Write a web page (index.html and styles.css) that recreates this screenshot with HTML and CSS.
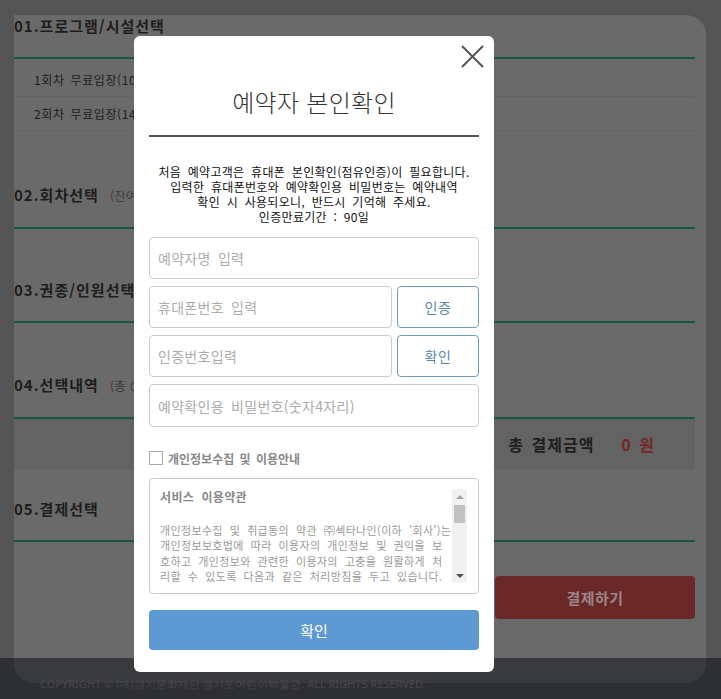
FILE: index.html
```html
<!DOCTYPE html>
<html lang="ko">
<head>
<meta charset="utf-8">
<title>예약자 본인확인</title>
<link rel="stylesheet" href="styles.css">
</head>
<body>
<div class="page">
  <main class="card">
    <section class="sec sec-1">
      <h2 class="sec-title">01.프로그램/시설선택</h2>
      <ul class="rows">
        <li>1회차 무료입장(10:00~11:30)</li>
        <li>2회차 무료입장(14:00~15:30)</li>
      </ul>
    </section>
    <section class="sec sec-2">
      <h2 class="sec-title">02.회차선택 <span class="sub">(잔여인원 : 0명)</span></h2>
    </section>
    <section class="sec sec-3">
      <h2 class="sec-title">03.권종/인원선택</h2>
    </section>
    <section class="sec sec-4">
      <h2 class="sec-title">04.선택내역 <span class="sub">(총 0건)</span></h2>
      <div class="total">
        <span class="total-label">총 결제금액</span>
        <span class="total-value">0 원</span>
      </div>
    </section>
    <section class="sec sec-5">
      <h2 class="sec-title">05.결제선택</h2>
      <div class="pay-row">
        <button class="pay-btn" type="button">결제하기</button>
      </div>
    </section>
  </main>
  <footer class="footer">COPYRIGHT © (재)경기문화재단 경기도어린이박물관. ALL RIGHTS RESERVED.</footer>
</div>

<div class="modal" role="dialog" aria-labelledby="modal-title">
  <button class="close" type="button" aria-label="닫기">
    <svg width="23" height="23" viewBox="0 0 23 23"><path d="M1 1 L22 22 M22 1 L1 22" stroke="#555" stroke-width="2" fill="none"/></svg>
  </button>
  <h1 class="modal-title" id="modal-title">예약자 본인확인</h1>
  <p class="notice">처음 예약고객은 휴대폰 본인확인(점유인증)이 필요합니다.<br>입력한 휴대폰번호와 예약확인용 비밀번호는 예약내역<br>확인 시 사용되오니, 반드시 기억해 주세요.<br>인증만료기간 : 90일</p>
  <div class="fields">
    <input class="input" type="text" placeholder="예약자명 입력">
    <div class="field-row">
      <input class="input" type="text" placeholder="휴대폰번호 입력">
      <button class="btn-line" type="button">인증</button>
    </div>
    <div class="field-row">
      <input class="input" type="text" placeholder="인증번호입력">
      <button class="btn-line" type="button">확인</button>
    </div>
    <input class="input input-last" type="password" placeholder="예약확인용 비밀번호(숫자4자리)">
  </div>
  <label class="agree"><input class="check" type="checkbox"><span>개인정보수집 및 이용안내</span></label>
  <div class="terms">
    <div class="terms-body">
      <div class="terms-scroll">
        <p class="terms-title">서비스 이용약관</p>
        <p class="terms-text">개인정보수집 및 취급동의 약관 ㈜섹타나인(이하 '회사')는 개인정보보호법에 따라 이용자의 개인정보 및 권익을 보호하고 개인정보와 관련한 이용자의 고충을 원활하게 처리할 수 있도록 다음과 같은 처리방침을 두고 있습니다. 회사는 개인정보처리방침을 개정하는 경우 웹사이트 공지사항(또는 개별공지)을 통하여 공지할 것입니다. 제1조 (개인정보의 처리목적) 회사는 개인정보를 다음의 목적을 위해 처리합니다.</p>
      </div>
      <div class="scrollbar" aria-hidden="true">
        <span class="sb-btn sb-up"></span>
        <span class="sb-thumb"></span>
        <span class="sb-track"></span>
        <span class="sb-btn sb-down"></span>
      </div>
    </div>
  </div>
  <button class="confirm" type="button">확인</button>
</div>
</body>
</html>
```

FILE: styles.css
```css
* { box-sizing: border-box; }

html, body {
  margin: 0;
  padding: 0;
}

body {
  font-family: "Noto Sans CJK KR", "Noto Sans", sans-serif;
  overflow: hidden;
}

.page {
  height: 699px;
  padding: 15px 15px 0 14px;
  background: linear-gradient(to bottom, #555555 658px, #2e2f32 658px);
  overflow: hidden;
}

.card {
  height: 668px;
  padding: 1px 11px 0 0;
  border-radius: 0 20px 20px 20px;
  background: linear-gradient(to bottom, #6a6a6a 643px, #393a3d 643px);
}

.sec-title {
  margin: 0;
  font-size: 15px;
  font-weight: 700;
  letter-spacing: 1px;
  line-height: 20px;
  padding-bottom: 21px;
  border-bottom: 2px solid #15573f;
  color: #1d1d1d;
}

.sub {
  margin-left: 6px;
  font-size: 12px;
  font-weight: 400;
  letter-spacing: 0.5px;
  color: #3a3a3a;
}

.rows {
  list-style: none;
  margin: 0;
  padding: 4px 0 0;
}

.rows li {
  height: 34px;
  line-height: 34px;
  padding-left: 20px;
  font-size: 12px;
  letter-spacing: 0.6px;
  word-spacing: 2px;
  color: #1e1e1e;
  border-bottom: 1px solid #646464;
}

.sec-2 { margin-top: 54px; }
.sec-3 { margin-top: 51px; }
.sec-4 { margin-top: 52px; }
.sec-5 { margin-top: 30px; }

.total {
  height: 50px;
  display: flex;
  justify-content: flex-end;
  align-items: center;
  gap: 27px;
  padding-right: 40px;
  background: #636363;
  font-size: 16px;
  font-weight: 700;
  letter-spacing: 1px;
  word-spacing: 2px;
}

.total-label { color: #1e1e1e; }
.total-value { color: #742626; }

.pay-row {
  display: flex;
  justify-content: flex-end;
  margin-top: 34px;
}

.pay-btn {
  width: 200px;
  height: 43px;
  border: 0;
  border-radius: 4px;
  background: #6b2828;
  color: #9c8585;
  font-family: inherit;
  font-size: 15px;
  font-weight: 700;
  letter-spacing: 0.5px;
}

.footer {
  margin-top: -6px;
  padding-left: 26px;
  font-family: "Noto Sans", sans-serif;
  font-size: 11px;
  line-height: 14px;
  color: #47484b;
}

/* modal */
.modal {
  position: fixed;
  left: 134px;
  top: 36px;
  width: 360px;
  height: 636px;
  padding: 0 15px;
  background: #fff;
  border-radius: 6px;
}

.close {
  position: absolute;
  top: 9px;
  right: 10px;
  width: 23px;
  height: 23px;
  padding: 0;
  border: 0;
  background: none;
}

.close svg { display: block; }

.modal-title {
  margin: 0;
  padding-top: 51px;
  padding-bottom: 18px;
  line-height: 30px;
  font-size: 24px;
  font-weight: 300;
  letter-spacing: 0.3px;
  color: #333;
  text-align: center;
  border-bottom: 2px solid #555;
}

.notice {
  margin: 27px 0 0;
  font-size: 12px;
  line-height: 15px;
  word-spacing: 3px;
  letter-spacing: 0.3px;
  color: #111;
  text-align: center;
}

.fields {
  margin-top: 13px;
  display: flex;
  flex-direction: column;
  gap: 7px;
}

.field-row {
  display: flex;
  gap: 5px;
}

.input {
  width: 100%;
  height: 42px;
  padding: 0 8px;
  border: 1px solid #ccc;
  border-radius: 4px;
  font-family: inherit;
  font-size: 14px;
  letter-spacing: 0.3px;
  word-spacing: 3px;
  color: #333;
  outline: none;
}

.field-row .input { flex: 1; }

.input::placeholder { color: #acacac; }

.input-last { height: 43px; }

.btn-line {
  flex: 0 0 82px;
  height: 42px;
  border: 1px solid #6f9bb9;
  border-radius: 4px;
  background: #fff;
  color: #5a87a8;
  font-family: inherit;
  font-size: 14px;
  letter-spacing: 0.5px;
}

.agree {
  margin-top: 24px;
  display: flex;
  align-items: center;
  gap: 5px;
  height: 14px;
  font-size: 12px;
  font-weight: 700;
  word-spacing: 2px;
  color: #888;
}

.check {
  appearance: none;
  -webkit-appearance: none;
  width: 14px;
  height: 14px;
  margin: 0;
  border: 1px solid #aaa;
  background: #fff;
}

.terms {
  margin-top: 13px;
  height: 116px;
  padding: 10px 11px 10px 10px;
  border: 1px solid #c8c8c8;
  border-radius: 4px;
}

.terms-body {
  display: flex;
  height: 94px;
}

.terms-scroll {
  flex: 1;
  min-width: 0;
  overflow: hidden;
  font-size: 11px;
  line-height: 15.3px;
  word-spacing: 3.5px;
  letter-spacing: 0.35px;
  color: #999;
  word-break: break-all;
}

.terms-title {
  margin: 0 0 19px;
  font-size: 12px;
  font-weight: 700;
  line-height: 15px;
  color: #888;
}

.terms-text {
  margin: 0;
}

.scrollbar {
  flex: 0 0 15px;
  display: flex;
  flex-direction: column;
  background: #f1f1f1;
}

.sb-btn {
  flex: 0 0 15px;
  display: flex;
  align-items: center;
  justify-content: center;
}

.sb-btn::before {
  content: "";
  width: 0;
  height: 0;
  border-left: 4px solid transparent;
  border-right: 4px solid transparent;
}

.sb-up::before { border-bottom: 4px solid #a3a3a3; }
.sb-down::before { border-top: 4px solid #505050; }

.sb-thumb {
  flex: 0 0 18px;
  margin: 1px 2px 0;
  background: #c1c1c1;
}

.sb-track { flex: 1; }

.confirm {
  display: block;
  width: 100%;
  height: 40px;
  margin-top: 16px;
  border: 0;
  border-radius: 4px;
  background: #5d9ad4;
  color: #fff;
  font-family: inherit;
  font-size: 15px;
}
```
